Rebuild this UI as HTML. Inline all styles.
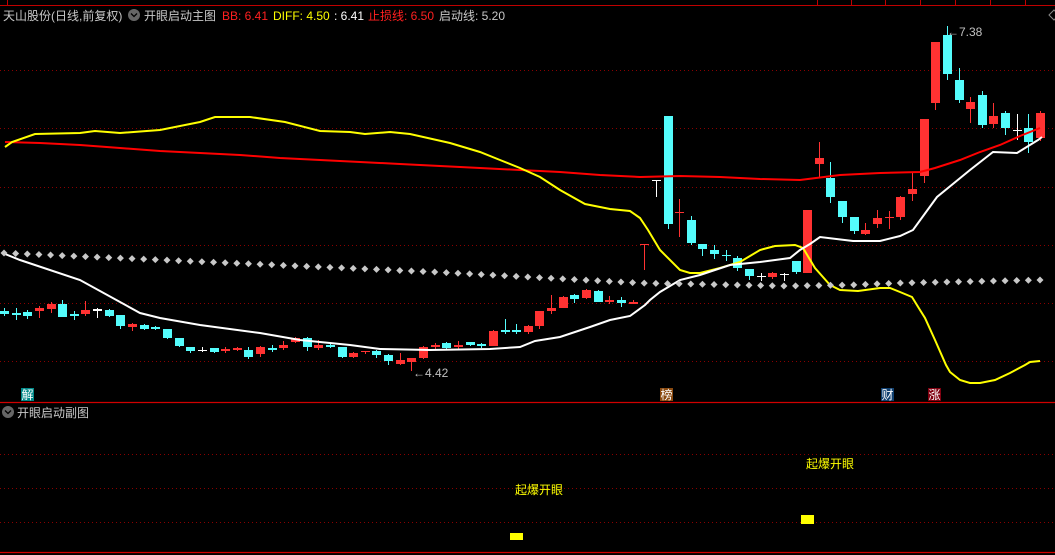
<!DOCTYPE html>
<html><head><meta charset="utf-8"><style>
html,body{margin:0;padding:0;background:#000;width:1055px;height:555px;overflow:hidden}
svg{display:block}
text{font-family:"Liberation Sans","Noto Sans CJK SC",sans-serif;font-size:12px}
</style></head><body>
<svg id="s" width="1055" height="555" xmlns="http://www.w3.org/2000/svg">
<rect width="1055" height="555" fill="#000"/>
<!-- top strip -->
<line x1="0" y1="5.5" x2="1055" y2="5.5" stroke="#c00000" stroke-width="1"/>
<g stroke="#c00000"><line x1="7.5" y1="0" x2="7.5" y2="5"/><line x1="817.5" y1="0" x2="817.5" y2="5"/><line x1="851.5" y1="0" x2="851.5" y2="5"/><line x1="885.5" y1="0" x2="885.5" y2="5"/><line x1="920.5" y1="0" x2="920.5" y2="5"/><line x1="955.5" y1="0" x2="955.5" y2="5"/><line x1="990.5" y1="0" x2="990.5" y2="5"/><line x1="1025.5" y1="0" x2="1025.5" y2="5"/></g>
<!-- grid -->
<g stroke="#8a0000" stroke-width="1" stroke-dasharray="1,3">
<line x1="0" y1="70.5" x2="1055" y2="70.5"/><line x1="0" y1="128.5" x2="1055" y2="128.5"/><line x1="0" y1="187.5" x2="1055" y2="187.5"/><line x1="0" y1="245.5" x2="1055" y2="245.5"/><line x1="0" y1="303.5" x2="1055" y2="303.5"/><line x1="0" y1="361.5" x2="1055" y2="361.5"/>
<line x1="0" y1="454.5" x2="1055" y2="454.5"/><line x1="0" y1="488.5" x2="1055" y2="488.5"/><line x1="0" y1="522.5" x2="1055" y2="522.5"/>
</g>
<line x1="0" y1="402.5" x2="1055" y2="402.5" stroke="#d00000" stroke-width="1.2"/>
<line x1="0" y1="552.5" x2="1055" y2="552.5" stroke="#d00000" stroke-width="1.2"/>
<!-- header -->
<text x="3" y="20" fill="#c8c8c8">天山股份(日线,前复权)</text>
<circle cx="134" cy="15" r="6" fill="#666"/><path d="M131 13.5 L134 16.5 L137 13.5" stroke="#000" stroke-width="1.3" fill="none"/>
<text x="144" y="20" fill="#c8c8c8">开眼启动主图</text>
<text x="222" y="20" fill="#ff2020">BB: 6.41</text>
<text x="273" y="20" fill="#ffff00">DIFF: 4.50</text>
<text x="334" y="20" fill="#ffffff">: 6.41</text>
<text x="368" y="20" fill="#ff2020">止损线: 6.50</text>
<text x="439" y="20" fill="#c8c8c8">启动线: 5.20</text>
<path d="M1049 15 L1054 10 L1059 15 L1054 20Z" stroke="#888" fill="none"/>
<g id="c"></g>
<!-- lines -->
<polyline fill="none" stroke="#ff0000" stroke-width="2" points="5,142 40,143 80,145 120,148 160,151 200,153 240,155 280,158 320,160 360,162 400,164 440,166 480,168 520,170 560,172 600,175 640,177 680,176 720,177 760,179 800,180 840,175 880,173 920,172 935,168 960,160 980,152 1000,145 1020,136 1040,128"/>
<polyline fill="none" stroke="#ffff00" stroke-width="2" points="5,147 12,142 35,134 80,133 95,131 120,133 160,130 200,122 215,117 250,117 285,122 320,131 350,132 365,134 390,132 410,134 450,143 480,152 500,160 520,168 540,177 560,190 585,204 610,209 630,211 640,218 648,230 660,250 680,270 690,273 700,273 720,268 740,262 760,250 775,246 795,245 803,248 815,268 830,285 840,290 858,291 880,288 890,288 900,292 912,297 920,310 925,318 935,340 946,365 950,372 960,380 970,383 980,383 995,380 1010,373 1025,365 1030,362 1040,361"/>
<polyline fill="none" stroke="#ffffff" stroke-width="2" points="5,254 20,260 80,280 140,313 160,318 200,325 260,333 300,340 350,345 380,349 430,350 490,349 520,347 535,341 560,337 590,327 610,320 630,316 645,305 650,300 660,292 680,280 700,275 730,265 760,262 790,258 800,250 810,244 820,237 853,241 880,241 900,236 913,230 937,197 970,170 993,152 1017,153 1038,140 1042,137"/>
<g id="d"></g>
<!-- labels -->
<text x="413" y="377" fill="#c0c0c0" font-size="11">←4.42</text>
<text x="947" y="36" fill="#c0c0c0" font-size="11">←7.38</text>
<rect x="21" y="388" width="13" height="13" fill="#008888"/><text x="21.5" y="399" fill="#fff" font-size="12">解</text>
<rect x="660" y="388" width="13" height="13" fill="#8a4a10"/><text x="660.5" y="399" fill="#fff" font-size="12">榜</text>
<rect x="881" y="388" width="13" height="13" fill="#104070"/><text x="881.5" y="399" fill="#fff" font-size="12">财</text>
<rect x="928" y="388" width="13" height="13" fill="#800010"/><text x="928.5" y="399" fill="#fff" font-size="12">涨</text>
<!-- sub panel -->
<circle cx="8" cy="412" r="6" fill="#666"/><path d="M5 410.5 L8 413.5 L11 410.5" stroke="#000" stroke-width="1.3" fill="none"/>
<text x="17" y="417" fill="#c8c8c8">开眼启动副图</text>
<text x="806" y="468" fill="#ffff00">起爆开眼</text>
<text x="515" y="494" fill="#ffff00">起爆开眼</text>
<rect x="801" y="515" width="13" height="9" fill="#ffff00"/>
<rect x="510" y="533" width="13" height="7" fill="#ffff00"/>
</svg>
<script>
var C=[
['c',311,314,308,316],['c',313,315,308,320],['c',312,316,310,319],['r',308,311,306,318],['r',304,309,302,313],['c',304,317,300,317],['c',314,316,311,320],['r',310,314,301,316],['w',309,311,308,318],['c',310,316,309,317],
['c',315,326,315,329],['r',324,327,323,331],['c',325,329,324,330],['c',327,329,326,330],['c',329,338,329,339],['c',338,346,338,347],['c',347,351,347,353],['w',350,351,347,352],['c',348,352,348,353],['r',349,351,347,353],
['r',348,350,347,351],['c',350,357,347,359],['r',347,354,346,357],['c',348,350,345,352],['r',345,348,341,350],['r',338,342,337,343],['c',338,347,337,351],['r',345,348,340,350],['c',345,347,344,348],['c',347,357,347,358],
['r',353,357,352,358],['r',351,352,351,354],['c',351,355,350,358],['c',355,361,354,365],['r',360,364,353,365],['r',358,362,358,371],['r',347,358,346,359],['r',345,347,343,350],['c',343,348,342,349],['r',345,347,341,349],
['c',342,345,342,346],['c',344,346,343,348],['r',331,346,330,346],['c',330,332,319,334],['c',330,332,324,334],['r',326,332,325,334],['r',311,326,311,329],['r',308,311,295,314],['r',297,308,296,308],['c',295,299,294,303],
['r',290,298,289,299],['c',291,302,290,302],['r',300,302,296,304],['c',300,303,297,307],['r',302,304,300,304],['r',244,245,244,270],['w',180,181,180,197],['c',116,224,116,229],['r',212,213,199,237],['c',220,243,216,245],
['c',244,249,244,256],['c',250,254,245,259],['c',255,256,250,261],['c',258,268,256,271],['c',269,276,269,280],['w',276,277,273,281],['r',273,277,272,279],['w',274,275,273,281],['c',261,272,261,274],['r',210,273,210,273],
['r',158,164,142,178],['c',178,197,162,203],['c',201,217,201,223],['c',217,231,217,234],['r',230,234,223,235],['r',218,224,210,228],['r',217,218,211,229],['r',197,217,196,220],['r',189,194,172,201],['r',119,176,119,183],
['r',42,103,42,110],['c',35,74,26,80],['c',80,100,68,103],['r',102,109,97,123],['c',95,125,91,128],['r',116,124,103,128],['c',113,128,111,135],['w',130,131,114,140],['c',128,142,114,153],['r',113,138,111,141]];
var col={c:'#54fcfc',r:'#ff3232',w:'#ffffff'},h='';
var n=C.length,step=(1040-4)/(n-1);
for(var i=0;i<n;i++){var x=Math.round(4+step*i),d=C[i],f=col[d[0]];
h+='<line x1="'+(x+0.5)+'" y1="'+d[3]+'" x2="'+(x+0.5)+'" y2="'+d[4]+'" stroke="'+f+'" stroke-width="1"/>';
var bh=Math.max(d[2]-d[1],1);h+='<rect x="'+(x-4)+'" y="'+d[1]+'" width="9" height="'+bh+'" fill="'+f+'"/>';}
document.getElementById('c').innerHTML=h;
var g='';
function dy(x){var p=[[4,253],[435,272],[640,283],[785,286],[850,285],[900,283],[1040,280]];for(var k=0;k<p.length-1;k++){if(x<=p[k+1][0]){var t=(x-p[k][0])/(p[k+1][0]-p[k][0]);return p[k][1]+t*(p[k+1][1]-p[k][1]);}}return 280;}
for(var i=0;i<n;i++){var x=4+step*i,y=dy(x);g+='<path d="M'+x+' '+(y-3.5)+' L'+(x+3.5)+' '+y+' L'+x+' '+(y+3.5)+' L'+(x-3.5)+' '+y+'Z" fill="#c8c8c8"/>';}
document.getElementById('d').innerHTML=g;
</script>
</body></html>
